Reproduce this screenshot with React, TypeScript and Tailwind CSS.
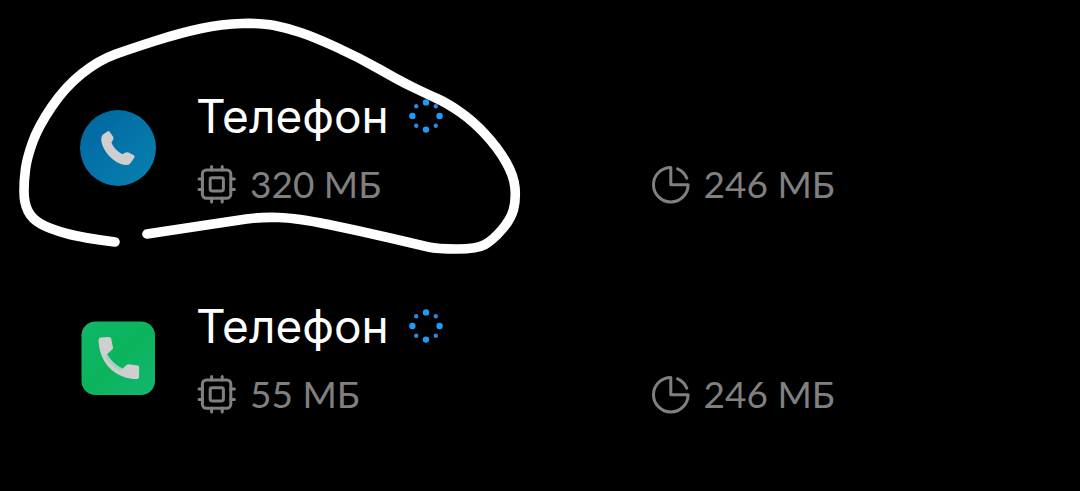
type Point = [number, number]

const apps = [
  { id: "dialer", name: "Телефон", memory: "320 МБ", storage: "246 МБ", icon: <DialerIcon /> },
  { id: "phone", name: "Телефон", memory: "55 МБ", storage: "246 МБ", icon: <PhoneIcon /> },
]

const marker: Point[] = [
  [115, 242], [83, 238], [50, 229], [32, 219], [24, 203], [24, 180], [27, 158], [38, 127], [65, 87],
  [99, 60], [133, 48], [180, 33], [222, 24], [262, 23], [287, 28], [314, 37], [360, 58], [400, 81],
  [427, 94], [447, 103], [473, 121], [498, 148], [514, 176], [516, 200], [511, 219], [493, 240],
  [477, 249], [437, 249], [420, 245], [360, 231], [297, 218], [260, 217], [233, 221], [193, 227], [147, 234],
]

// smooth line: every point is the control point between two midpoints
function toPath(points: Point[]) {
  let d = `M${points[0][0]} ${points[0][1]}`
  for (let i = 1; i < points.length - 1; i++) {
    const [x, y] = points[i]
    const [nx, ny] = points[i + 1]
    d += `Q${x} ${y} ${(x + nx) / 2} ${(y + ny) / 2}`
  }
  const [lx, ly] = points[points.length - 1]
  return `${d}L${lx} ${ly}`
}

function DialerIcon() {
  return (
    <svg viewBox="0 0 76 76" className="size-[76px] shrink-0" aria-hidden="true">
      <defs>
        <linearGradient id="dialer" x1="0" y1="0" x2="1" y2="1">
          <stop offset="0" stopColor="#0065a0" />
          <stop offset="1" stopColor="#0882b0" />
        </linearGradient>
      </defs>
      <circle cx="38" cy="38" r="38" fill="url(#dialer)" />
      <path
        d="M28 21.2 Q28.9 20.8 29.6 21.7 L33 26.6 Q34 28.6 33 30 L31.4 32.4 Q34 39.5 42.4 44.2 L45 42.8 Q46.4 42 48 42.3 L53.4 45 Q55.3 46.2 54.4 47.5 L50.8 52.8 Q49.4 55.2 46.4 55 C33.5 54.5 21.4 39.5 21.2 29 Q21.2 25.6 23.6 24 Z"
        fill="#cfcfcf"
      />
    </svg>
  )
}

function PhoneIcon() {
  return (
    <svg viewBox="0 0 76 76" className="size-[76px] shrink-0" aria-hidden="true">
      <defs>
        <linearGradient id="phone" x1="0" y1="0" x2="1" y2="1">
          <stop offset="0" stopColor="#10b766" />
          <stop offset="0.5" stopColor="#0bb45c" />
          <stop offset="1" stopColor="#12b672" />
        </linearGradient>
      </defs>
      <rect x="1.5" y="1.5" width="73.5" height="73.5" rx="14" fill="url(#phone)" />
      <path
        d="M21 17.4 L29 17 Q30.8 17 31.2 18.6 L33 27.6 Q33.2 28.8 32.3 29.6 L27 34.2 C30.5 40.5 36 45.5 42.5 48.8 L46.8 44.8 Q47.7 44 48.8 44.2 L57.8 45.6 Q59.2 45.8 59.2 47.2 L59 57.2 Q59 59 57 59 C35 59 19 42 18.6 20.4 Q18.6 17.6 21 17.4 Z"
        fill="#cfcfcf"
      />
      <path d="M25 36.4 L27 34.2 C30.5 40.5 36 45.5 42.5 48.8 L40 51 C33 47.5 28 42.5 25 36.4 Z" fill="#a9d0c4" />
    </svg>
  )
}

function ChipIcon() {
  return (
    <svg viewBox="0 0 40 40" className="size-10 shrink-0" fill="none" stroke="currentColor" strokeWidth="3" aria-hidden="true">
      <rect x="6.4" y="5.9" width="28.4" height="28.4" rx="4" />
      <rect x="14.2" y="13.7" width="13.2" height="13.2" rx="1.8" />
      <path
        d="M15.6 6V2.5M26.2 6V2.5M15.6 34V37.9M26.2 34V37.9M6.5 15H3M6.5 25.6H3M34.7 15H38.4M34.7 25.6H38.4"
        strokeLinecap="round"
      />
    </svg>
  )
}

function StorageIcon() {
  return (
    <svg viewBox="0 0 40 40" className="size-10 shrink-0" fill="none" stroke="currentColor" strokeWidth="3" aria-hidden="true">
      <path d="M18.8 3.4V20.7H36.1A17.3 17.3 0 1 1 18.8 3.4Z" strokeLinejoin="round" />
      <path d="M25.6 4.8A17.3 17.3 0 0 1 34.8 14.2" strokeLinecap="round" />
    </svg>
  )
}

function Spinner() {
  return (
    <svg viewBox="0 0 34 34" className="size-[34px] shrink-0" role="img" aria-label="Загрузка">
      <g fill="#1d9bf5">
        <circle cx="17" cy="3.4" r="3.2" />
        <circle cx="30.6" cy="17" r="3.2" />
        <circle cx="17" cy="30.6" r="3.2" />
        <circle cx="3.4" cy="17" r="3.2" />
      </g>
      <g fill="#2b87dc">
        <circle cx="7.2" cy="7.2" r="2.2" />
        <circle cx="26.8" cy="7.2" r="2.2" />
        <circle cx="26.8" cy="26.8" r="2.2" />
        <circle cx="7.2" cy="26.8" r="2.2" />
      </g>
    </svg>
  )
}

export default function App() {
  return (
    <main className="relative min-h-screen overflow-hidden bg-black pt-[43px] pb-7 font-['Lato',sans-serif] text-white">
      <ul>
        {apps.map((app) => (
          <li key={app.id} className="flex h-[210px] items-center gap-10 px-20">
            {app.icon}
            <div className="flex-1 pb-1">
              <div className="flex items-center gap-5">
                <h2 className="font-['Inter',sans-serif] text-[46px] leading-[62px]">{app.name}</h2>
                <Spinner />
              </div>
              <div className="mt-[14px] grid grid-cols-[17fr_13fr] text-[37px] leading-[46px] text-[#808080]">
                <div className="flex items-center gap-[14px]">
                  <ChipIcon />
                  <span>{app.memory}</span>
                </div>
                <div className="flex items-center gap-3">
                  <StorageIcon />
                  <span>{app.storage}</span>
                </div>
              </div>
            </div>
          </li>
        ))}
      </ul>

      <svg viewBox="0 0 540 260" className="pointer-events-none absolute top-0 left-0 w-[540px]" aria-hidden="true">
        <path d={toPath(marker)} fill="none" stroke="#fff" strokeWidth="9.6" strokeLinecap="round" strokeLinejoin="round" />
      </svg>
    </main>
  )
}
